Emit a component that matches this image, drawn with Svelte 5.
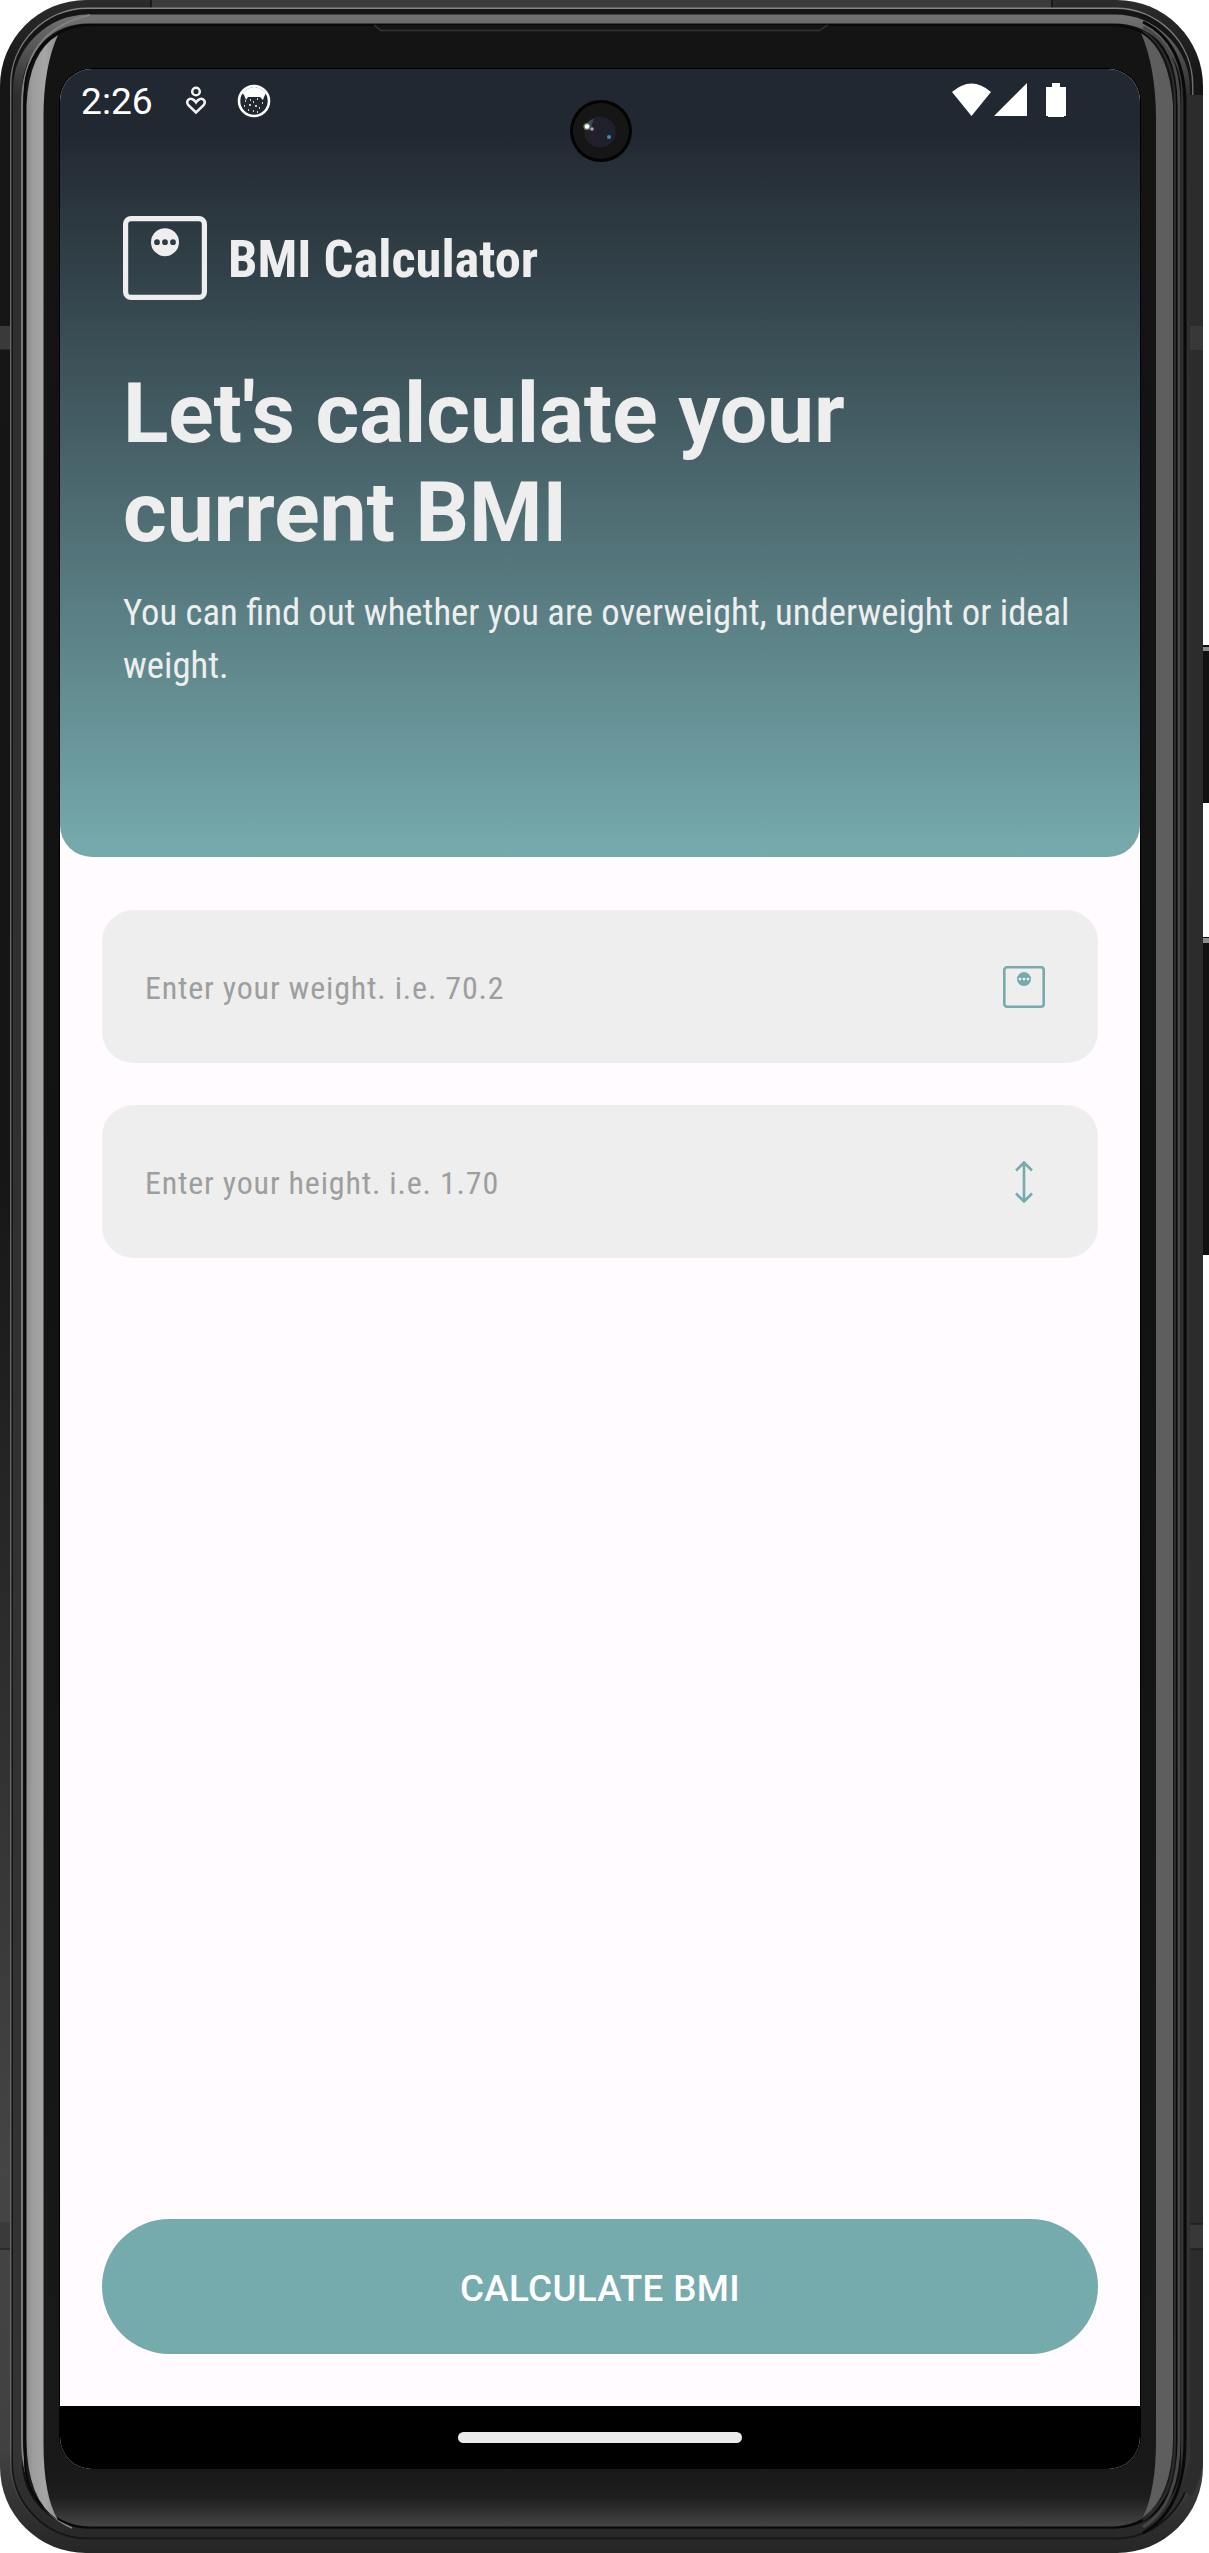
<script>
  const fields = [
    { id: 'weight', hint: 'Enter your weight. i.e. 70.2' },
    { id: 'height', hint: 'Enter your height. i.e. 1.70' }
  ];
</script>

{#snippet scale()}
  <svg class="scale" viewBox="0 0 84 84">
    <rect x="2.6" y="2.6" width="78.8" height="78.8" rx="5.5" fill="none" stroke="currentColor" stroke-width="5.2" />
    <path fill="currentColor" fill-rule="evenodd" d="M42 12.2a14 14 0 1 1 0 28a14 14 0 1 1 0-28zM34 23.3a2.9 2.9 0 1 0 0 5.8a2.9 2.9 0 1 0 0-5.8zM42 23.3a2.9 2.9 0 1 0 0 5.8a2.9 2.9 0 1 0 0-5.8zM50 23.3a2.9 2.9 0 1 0 0 5.8a2.9 2.9 0 1 0 0-5.8z" />
  </svg>
{/snippet}

<div class="device">
  <svg class="frame" viewBox="0 0 1209 2553">
    <defs>
      <linearGradient id="shell" x1="0" y1="0" x2="0" y2="1">
        <stop offset="0" stop-color="#2c2c2c" />
        <stop offset="0.03" stop-color="#161616" />
        <stop offset="0.45" stop-color="#151515" />
        <stop offset="0.85" stop-color="#454545" />
        <stop offset="0.96" stop-color="#414141" />
        <stop offset="1" stop-color="#262626" />
      </linearGradient>
      <linearGradient id="rim" x1="0" y1="0" x2="0" y2="1">
        <stop offset="0" stop-color="#707070" />
        <stop offset="0.004" stop-color="#666" />
        <stop offset="0.03" stop-color="#2e2e2e" />
        <stop offset="0.97" stop-color="#333" />
        <stop offset="1" stop-color="#292929" />
      </linearGradient>
      <linearGradient id="hair" x1="0" y1="0" x2="0" y2="1">
        <stop offset="0" stop-color="#858585" />
        <stop offset="0.04" stop-color="#666" />
        <stop offset="0.96" stop-color="#666" />
        <stop offset="1" stop-color="#242424" />
      </linearGradient>
      <linearGradient id="left" x1="0" y1="0" x2="1" y2="0">
        <stop offset="0" stop-color="#8c8c8c" />
        <stop offset="0.2" stop-color="#9d9d9d" />
        <stop offset="0.6" stop-color="#a6a6a6" />
        <stop offset="1" stop-color="#8c8c8c" />
      </linearGradient>
      <linearGradient id="glass" x1="0" y1="0" x2="0" y2="1">
        <stop offset="0" stop-color="#141414" />
        <stop offset="0.5" stop-color="#121212" />
        <stop offset="0.98" stop-color="#191919" />
        <stop offset="0.988" stop-color="#1e1e1e" />
        <stop offset="1" stop-color="#464646" />
      </linearGradient>
    </defs>
    <path d="M1196 645h13v158h-13zM1196 937h13v318h-13z" fill="#111" />
    <path d="M1203 647h6v4h-6zM1203 938h6v5h-6z" fill="#8d8d8d" />
    <rect width="1203" height="2553" rx="86" fill="url(#shell)" />
    <path d="M151 0h901v9H151z" fill="#3b3b3b" />
    <path d="M151 0v9M1052 0v11" stroke="#101010" stroke-width="1.5" />
    <path d="M0 326h11v24H0zM0 2222h10v26H0z" fill="#3a3a3a" />
    <path d="M0 2249h10M0 350h10" stroke="#151515" />
    <rect x="10.7" y="8.2" width="1182" height="2531.500" rx="77" fill="#151515" stroke="url(#hair)" stroke-width="1.400" />
    <rect x="17.500" y="19" width="1168" height="2514" rx="71" fill="#111" stroke="url(#rim)" stroke-width="9" />
    <path d="M90 15Q22 30 22 105V2440Q22 2505 72 2528" fill="none" stroke="#808080" stroke-width="1.800" />
    <path d="M1190 95V2460Q1187 2475 1180 2490L1192 2496Q1203 2475 1203 2460V95Z" fill="#2c2c2c" />
    <path d="M1190 326h13v24h-13zM1190 2224h13v25h-13z" fill="#383838" />
    <path d="M1190 2224h13M1190 2249h13" stroke="#151515" />
    <rect x="25" y="25" width="1152" height="2502.500" rx="66" fill="url(#glass)" stroke="#090909" stroke-width="2" />
    <path d="M26.500 105Q29 52 58 35Q43 68 43.500 120V2440Q43 2495 58 2520Q27 2500 26.500 2440Z" fill="url(#left)" />
    <path d="M1173 105Q1169 50 1141 33Q1156 68 1156 120V2440Q1156 2490 1143 2517Q1172 2497 1173 2440Z" fill="#5e5e5e" />
    <g fill="none">
      <path d="M1143 31Q1175 52 1175 105V2440Q1175 2500 1143 2520" stroke="#2c2c2c" stroke-width="2" />
      <path d="M1143 27Q1179 45 1179 105V2440Q1179 2505 1143 2527" stroke="#474747" stroke-width="3" />
      <path d="M1143 22Q1185 42 1185 105V2440Q1185 2510 1143 2533" stroke="#090909" stroke-width="3" />
    </g>
    <path d="M374 25h454l-9 5.500H381z" fill="#141414" />
    <path d="M374 25l7 5.500H819l9-5.500" fill="none" stroke="#353535" stroke-width="1.300" />
    <rect x="59" y="68" width="1082" height="2401" rx="33" fill="#000" />
  </svg>

  <main class="screen">
    <header class="hero">
      <div class="status">
        <span class="clock">2:26</span>
        <svg class="person" viewBox="0 0 22 30">
          <g fill="none" stroke="#f1f1f1" stroke-width="2.5">
            <circle cx="11" cy="5.5" r="3.8" />
            <path d="M11 26.5L3.4 19.2C0.3 15.2 4.2 11.6 7.4 13.2Q9.3 13.8 11 16.4Q12.7 13.8 14.6 13.2C17.8 11.6 21.7 15.2 18.6 19.2Z" />
          </g>
        </svg>
        <svg class="cat" viewBox="0 0 34 34">
          <circle cx="17" cy="17" r="15" fill="none" stroke="#fff" stroke-width="2.6" />
          <path d="M5 9Q17-3 29 9L27 13L26 16L23 13H11L9 16L7 11Z" fill="#fff" />
          <path d="M8 17h1M13 16h1M20 15h1M25 19h1M7 22h1M12 21h2M18 22h2M22 24h1M11 26h1M16 27h1M20 28h1M16 18h1" stroke="#fff" stroke-width="1.3" />
        </svg>
        <svg class="signals" viewBox="0 0 114 34">
          <path d="M0 9Q19.500-8 39 9L19.500 33Z" fill="#fff" />
          <path d="M75 0V33H42Z" fill="#fff" />
          <path d="M100 0h8v4h6v29h-2v1h-16v-1h-2V4h6z" fill="#fff" />
        </svg>
      </div>
      <div class="brand">
        {@render scale()}
        <span>BMI Calculator</span>
      </div>
      <h1>Let's calculate your current BMI</h1>
      <p>You can find out whether you are overweight, underweight or ideal weight.</p>
    </header>

    <form class="form">
      {#each fields as field (field.id)}
        <label class="field">
          <span>{field.hint}</span>
          {#if field.id === 'weight'}
            {@render scale()}
          {:else}
            <svg class="arrow" viewBox="0 0 42 42">
              <path d="M21 1.500V40.500M13 9.500L21 1.500L29 9.500M13 32.500L21 40.500L29 32.500" fill="none" stroke="currentColor" stroke-width="2.600" />
            </svg>
          {/if}
        </label>
      {/each}
      <button type="button">CALCULATE BMI</button>
    </form>
    <nav><i></i></nav>
  </main>

  <svg class="camera" viewBox="0 0 62 62">
    <circle cx="31" cy="31" r="31" fill="#030303" />
    <circle cx="31" cy="31" r="28" fill="#161617" />
    <circle cx="30" cy="32" r="15.500" fill="#20202a" />
    <path d="M16 27q1-7 8-8l-3 8z" fill="#34495a" />
    <circle cx="17" cy="26.500" r="3.600" fill="#737a69" />
    <circle cx="17" cy="26.500" r="2.200" fill="#fff" />
    <circle cx="22" cy="29" r="1.800" fill="#c09abd" />
    <circle cx="39" cy="37" r="2" fill="#3d86c4" />
  </svg>
</div>

<style>
  :global(body) { background: #fff; }
  .device {
    position: relative;
    width: 1209px;
    height: 2553px;
    box-sizing: border-box;
    padding: 69px 69px 84px 60px;
    font-family: Roboto, sans-serif;
  }
  svg { display: block; flex: none; }
  .frame { position: absolute; inset: 0; width: 1209px; height: 2553px; }
  .camera { position: absolute; left: 570px; top: 100px; width: 62px; height: 62px; }
  .screen {
    position: relative;
    display: flex;
    flex-direction: column;
    height: 2400px;
    overflow: hidden;
    border-radius: 32px;
    background: #fffbff;
  }
  .hero {
    box-sizing: border-box;
    height: 788px;
    padding: 0 63px;
    border-radius: 0 0 32px 32px;
    background: linear-gradient(#222831 63px, #76abae);
    color: #eee;
  }
  .status {
    display: flex;
    align-items: center;
    height: 63px;
    margin: 0 11px 0 -42px;
    color: #fff;
  }
  .clock { width: 104px; padding-top: 2px; font-size: 37.2px; line-height: 63px; }
  .person { width: 22px; height: 30px; margin-right: 30px; }
  .cat { width: 34px; height: 34px; }
  .signals { width: 114px; height: 34px; margin: 0 0 2px auto; }
  .brand {
    display: flex;
    align-items: center;
    gap: 21px;
    margin-top: 84px;
    font-size: 52.5px;
    font-weight: 700;
    font-stretch: 75%;
  }
  .brand .scale { width: 84px; height: 84px; }
  .brand span { padding-top: 1px; }
  h1 { margin: 64px 0 0; font-size: 84px; line-height: 99px; font-weight: 700; letter-spacing: -0.1px; }
  p { margin: 25px 0 0; font-size: 36.65px; line-height: 52.5px; font-stretch: 75%; }
  .form {
    flex: 1;
    display: flex;
    flex-direction: column;
    gap: 42px;
    padding: 53px 42px 52px;
  }
  .field {
    display: flex;
    align-items: center;
    justify-content: space-between;
    box-sizing: border-box;
    height: 153px;
    padding: 0 53px 0 43px;
    border-radius: 31.5px;
    background: #eee;
    color: #76abae;
  }
  .field span { padding-top: 2px; color: #9e9e9e; font-size: 32px; letter-spacing: 0.81px; font-stretch: 75%; }
  .field svg { width: 42px; height: 42px; }
  button {
    height: 135px;
    margin-top: auto;
    padding: 3px 0 0;
    border: 0;
    border-radius: 68px;
    background: #76abae;
    color: #fff;
    font: 500 36.75px Roboto, sans-serif;
    letter-spacing: 0.36px;
  }
  nav { display: flex; justify-content: center; align-items: center; height: 63px; background: #000; }
  nav i { width: 284px; height: 11px; border-radius: 5.5px; background: #ebebeb; }
</style>
